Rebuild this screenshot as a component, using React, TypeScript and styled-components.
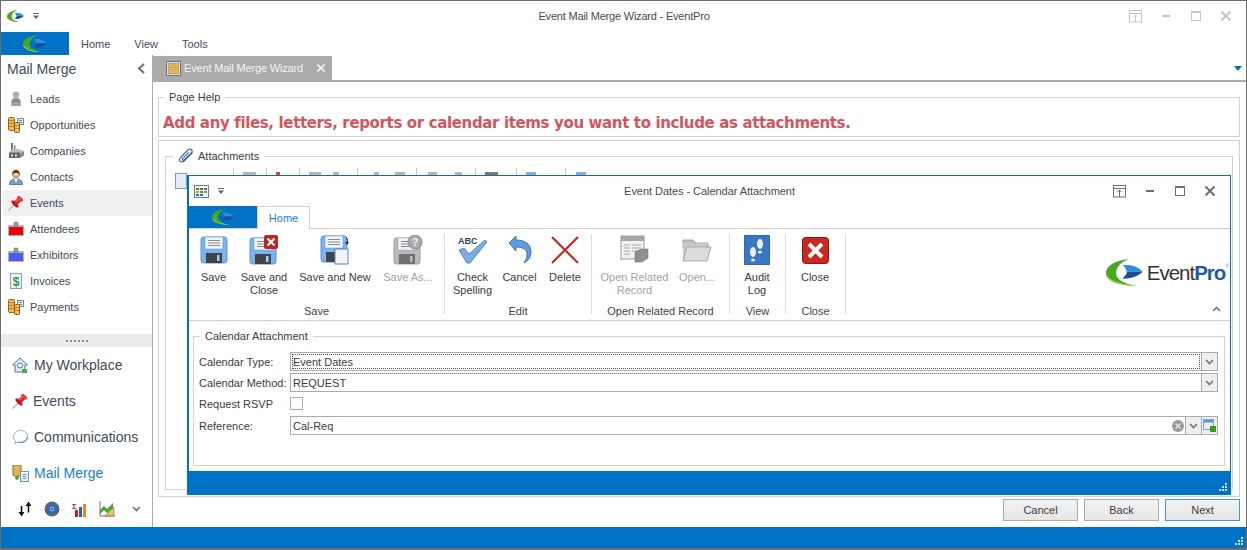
import React from "react";
import styled, { createGlobalStyle } from "styled-components";

const FONT = `"Liberation Sans", Arial, sans-serif`;

const GlobalStyle = createGlobalStyle`
  html, body {
    margin: 0;
    padding: 0;
    background: #fff;
  }
  * {
    box-sizing: border-box;
  }
`;

const Shell = styled.div`
  position: relative;
  width: 1247px;
  height: 550px;
  display: flex;
  flex-direction: column;
  overflow: hidden;
  background: #fff;
  border: 1px solid #6d6d6d;
  border-width: 1px 1px 2px 1px;
  font-family: ${FONT};
  font-size: 11px;
  color: #3c3c3c;
`;

const TitleBar = styled.div<{ $height: number }>`
  display: flex;
  align-items: center;
  height: ${({ $height }) => $height}px;
  flex: none;
`;

const TitleSide = styled.div<{ $right?: boolean; $pad: number }>`
  flex: 1;
  display: flex;
  align-items: center;
  justify-content: ${({ $right }) => ($right ? "flex-end" : "flex-start")};
  gap: 9px;
  padding: ${({ $right, $pad }) => ($right ? `0 ${$pad}px 0 0` : `0 0 0 ${$pad}px`)};
`;

const TitleText = styled.div<{ $tight?: boolean }>`
  color: #4a4a4a;
  font-size: 11px;
  letter-spacing: ${({ $tight }) => ($tight ? "-0.2px" : "-0.05px")};
  white-space: nowrap;
`;

const WinButton = styled.div<{ $faded?: boolean }>`
  width: 30px;
  height: 16px;
  display: flex;
  align-items: center;
  justify-content: center;
  color: ${({ $faded }) => ($faded ? "#c6c6c6" : "#6f6f6f")};
`;

const WinButtons = styled.div`
  display: flex;
`;

const MenuRow = styled.div`
  display: flex;
  align-items: center;
  height: 23px;
  margin-top: 1px;
  flex: none;
`;

const Brand = styled.div<{ $width: number }>`
  width: ${({ $width }) => $width}px;
  height: 100%;
  flex: none;
  background: #0072c6;
  display: flex;
  align-items: center;
  justify-content: center;
`;

const MenuItem = styled.div`
  font-size: 11px;
  color: #3f4a5a;
  margin-left: 12px;
  margin-right: 12px;
`;

const Body = styled.div`
  flex: 1;
  display: flex;
  min-height: 0;
`;

const Sidebar = styled.aside`
  width: 152px;
  flex: none;
  display: flex;
  flex-direction: column;
  border-right: 1px solid #ababab;
`;

const SideHeader = styled.div`
  height: 31px;
  display: flex;
  align-items: center;
  justify-content: space-between;
  padding: 0 6px 4px 6px;
  font-size: 14px;
  color: #404a58;
`;

const SideList = styled.div`
  display: flex;
  flex-direction: column;
  flex: 1;
`;

const SideItem = styled.div<{ $active?: boolean }>`
  height: 26px;
  display: flex;
  align-items: center;
  gap: 6px;
  margin: 0 0 0 2px;
  padding-left: 5px;
  background: ${({ $active }) => ($active ? "#f0f0f0" : "transparent")};
  font-size: 11px;
  color: #3f4a5a;
`;

const Splitter = styled.div`
  height: 13px;
  flex: none;
  background: #ebebeb;
  display: flex;
  align-items: center;
  justify-content: center;
  gap: 2px;
`;

const Dot = styled.span`
  width: 2px;
  height: 2px;
  background: #8f8f8f;
`;

const BigNav = styled.div`
  display: flex;
  flex-direction: column;
  flex: none;
`;

const BigItem = styled.div<{ $active?: boolean }>`
  height: 36px;
  display: flex;
  align-items: center;
  gap: 5px;
  padding-left: 11px;
  font-size: 14px;
  color: ${({ $active }) => ($active ? "#1580d8" : "#404a58")};
`;

const BottomIcons = styled.div`
  height: 36px;
  flex: none;
  display: flex;
  align-items: center;
  padding-left: 17px;
  gap: 12px;
`;

const MoreChevron = styled.span`
  display: flex;
  margin-left: 5px;
  color: #777;
`;

const Main = styled.main`
  flex: 1;
  min-width: 0;
  display: flex;
  flex-direction: column;
`;

const TabStrip = styled.div`
  height: 27px;
  flex: none;
  display: flex;
  align-items: flex-end;
  justify-content: space-between;
  border-bottom: 2px solid #ababab;
  padding-right: 4px;
`;

const DocTab = styled.div`
  width: 179px;
  height: 24px;
  display: flex;
  align-items: center;
  gap: 3px;
  padding-left: 13px;
  background: #ababab;
  color: #f4f4f4;
  font-size: 11px;
  letter-spacing: -0.17px;
  white-space: nowrap;
`;

const TabClose = styled.span`
  margin-left: auto;
  margin-right: 7px;
  display: flex;
`;

const OverflowArrow = styled.div`
  width: 0;
  height: 0;
  margin-bottom: 9px;
  border-left: 4px solid transparent;
  border-right: 4px solid transparent;
  border-top: 5px solid #0072c6;
`;

const Content = styled.div`
  flex: 1;
  display: flex;
  flex-direction: column;
  min-height: 0;
  padding: 0 6px 0 5px;
`;

const Group = styled.fieldset`
  margin: 0;
  padding: 0 4px;
  min-width: 0;
  border: 1px solid #d2d2d2;
`;

const GroupTitle = styled.legend`
  display: flex;
  align-items: center;
  gap: 4px;
  margin-left: 1px;
  padding: 0 5px;
  font-size: 11px;
  line-height: 15px;
  color: #3c3c3c;
`;

const PageHelp = styled(Group)`
  height: 47px;
  margin-top: 8px;
`;

const HelpText = styled.div`
  margin-top: 7px;
  font-family: "DejaVu Sans", sans-serif;
  font-size: 15px;
  letter-spacing: -0.36px;
  line-height: 22px;
  font-weight: 700;
  color: #d2565c;
  white-space: nowrap;
`;

const StepBox = styled.div`
  flex: 1;
  min-height: 0;
  margin-top: 3px;
  border: 1px solid #d2d2d2;
  padding: 7px 6px 6px 6px;
  display: flex;
`;

const AttachGroup = styled(Group)`
  flex: 1;
  padding: 0 0 0 6px;
`;

const PeekBar = styled.div`
  display: flex;
  align-items: flex-start;
  height: 30px;
`;

const PeekDoc = styled.div`
  width: 12px;
  height: 16px;
  margin: 9px 0 0 3px;
  background: #e4edf7;
  border: 1px solid #7a9cc6;
`;

const PeekDivider = styled.div<{ $gap: number }>`
  width: 1px;
  height: 8px;
  margin: 4px 0 0 ${({ $gap }) => $gap}px;
  background: #c9c9c9;
  flex: none;
`;

const PeekMark = styled.div<{ $gap: number; $width: number; $color: string }>`
  width: ${({ $width }) => $width}px;
  height: 4px;
  margin: 8px 0 0 ${({ $gap }) => $gap}px;
  background: ${({ $color }) => $color};
  flex: none;
`;

const Footer = styled.div`
  height: 30px;
  flex: none;
  display: flex;
  align-items: flex-start;
  justify-content: flex-end;
  gap: 6px;
  padding: 2px 6px 0 0;
`;

const FootButton = styled.div<{ $primary?: boolean }>`
  width: 75px;
  height: 22px;
  display: flex;
  align-items: center;
  justify-content: center;
  font-size: 11px;
  color: #3c3c3c;
  border: 1px solid ${({ $primary }) => ($primary ? "#3d9bea" : "#ababab")};
  background: linear-gradient(#f2f2f2, #e6e6e6);
`;

const StatusBar = styled.div<{ $height: number }>`
  position: relative;
  height: ${({ $height }) => $height}px;
  flex: none;
  background: #0072c6;
`;

const Grip = styled.svg`
  position: absolute;
  right: 2px;
  bottom: 2px;
`;

const Modal = styled.section`
  position: absolute;
  left: 186px;
  top: 174px;
  width: 1044px;
  height: 320px;
  display: flex;
  flex-direction: column;
  background: #fff;
  border: 1px solid #0072c6;
  border-left-width: 2px;
`;

const ModalTabs = styled.div`
  height: 23px;
  flex: none;
  display: flex;
  border-bottom: 1px solid #cfcfcf;
`;

const ActiveTab = styled.div`
  width: 53px;
  height: 23px;
  display: flex;
  align-items: center;
  justify-content: center;
  background: #fff;
  border: 1px solid #cfcfcf;
  border-bottom: none;
  color: #1580d8;
  font-size: 11px;
`;

const Ribbon = styled.div`
  position: relative;
  height: 92px;
  flex: none;
  display: flex;
  padding-top: 5px;
  border-bottom: 1px solid #cfcfcf;
`;

const RibbonGroup = styled.div<{ $width: number }>`
  width: ${({ $width }) => $width}px;
  height: 80px;
  flex: none;
  display: flex;
  flex-direction: column;
  border-right: 1px solid #dedede;
`;

const RibbonButtons = styled.div<{ $pad?: number }>`
  flex: 1;
  display: flex;
  padding-left: ${({ $pad }) => $pad ?? 0}px;
`;

const RibbonGroupLabel = styled.div`
  height: 15px;
  margin-bottom: -5px;
  text-align: center;
  font-size: 11px;
  line-height: 15px;
  color: #444;
`;

const RibbonButton = styled.div<{ $width: number; $off?: boolean }>`
  width: ${({ $width }) => $width}px;
  flex: none;
  display: flex;
  flex-direction: column;
  align-items: center;
  text-align: center;
  font-size: 11px;
  line-height: 13px;
  color: ${({ $off }) => ($off ? "#a2a2a2" : "#3c3c3c")};
`;

const RibbonIcon = styled.div`
  height: 30px;
  margin: 1px 0 6px;
  display: flex;
  align-items: center;
  justify-content: center;
`;

const LogoBox = styled.div`
  position: absolute;
  right: 1px;
  top: 30px;
  display: flex;
  align-items: center;
  gap: 4px;
`;

const LogoText = styled.span`
  font-size: 20.5px;
  letter-spacing: -1px;
  color: #333;
`;

const LogoPro = styled.b`
  color: #1e5ba8;
`;

const LogoMark = styled.sup`
  font-size: 5px;
  letter-spacing: 0;
  color: #8a9bb0;
  vertical-align: 12px;
  line-height: 0;
`;

const Collapse = styled.div`
  position: absolute;
  right: 9px;
  bottom: 8px;
  display: flex;
  color: #777;
`;

const ModalBody = styled.div`
  flex: 1;
  min-height: 0;
  padding: 0 5px 5px 4px;
  display: flex;
`;

const FormGroup = styled(Group)`
  flex: 1;
  padding: 0 6px 0 5px;
  margin-top: 8px;
`;

const FormGrid = styled.div`
  display: grid;
  grid-template-columns: 91px 1fr;
  row-gap: 2px;
  align-items: center;
  margin-top: 8px;
`;

const FormLabel = styled.div`
  font-size: 11px;
  color: #3c3c3c;
  white-space: nowrap;
`;

const FieldBox = styled.div`
  height: 19px;
  display: flex;
  align-items: stretch;
  border: 1px solid #ababab;
`;

const FieldValue = styled.div<{ $focused?: boolean }>`
  flex: 1;
  display: flex;
  align-items: center;
  margin: 1px;
  font-size: 11px;
  color: #3c3c3c;
  border: 1px dotted ${({ $focused }) => ($focused ? "#555" : "transparent")};
`;

const FieldButton = styled.div`
  width: 16px;
  flex: none;
  display: flex;
  align-items: center;
  justify-content: center;
  background: #efefef;
  border-left: 1px solid #ababab;
  color: #777;
`;

const ClearIcon = styled.div`
  width: 13px;
  flex: none;
  display: flex;
  align-items: center;
`;

const CheckBox = styled.div`
  width: 13px;
  height: 13px;
  margin: 3px 0 4px;
  border: 1px solid #ababab;
`;

/* ---- drawings ---- */

const Swoosh = ({ width }: { width: number }) => (
  <svg width={width} height={width * 0.73} viewBox="0 0 110 80">
    <path d="M68 0C28 4 0 20 0 42c0 22 34 36 92 38C58 74 30 62 30 42 30 24 46 8 68 0Z" fill="#4aa820" />
    <path d="M0 42c0 22 34 36 92 38C58 74 22 70 8 54 4 50 1 46 0 42Z" fill="#9ccc3c" />
    <path d="M50 18c26-2 48 6 59 20-20-1-36-1-47 0-3-8-7-14-12-20Z" fill="#2b8fe0" />
    <path d="M47 58c10-6 15-12 15-20 11-1 27-1 47 0-14 14-36 22-62 20Z" fill="#1a4f98" />
  </svg>
);

const PinBoxIcon = () => (
  <svg width="14" height="13" viewBox="0 0 14 13" fill="none" stroke="currentColor">
    <rect x=".5" y=".5" width="12" height="11.5" />
    <path d="M.5 3.500h12M6.500 12V5M4.500 7l2-2 2 2" />
  </svg>
);
const MinIcon = () => (
  <svg width="9" height="3" viewBox="0 0 9 3">
    <rect width="8" height="2" fill="currentColor" />
  </svg>
);
const MaxIcon = () => (
  <svg width="10" height="10" viewBox="0 0 10 10" fill="none" stroke="currentColor">
    <rect x=".5" y=".5" width="9" height="9" />
    <rect x="0" y="0" width="10" height="2" fill="currentColor" stroke="none" />
  </svg>
);
const CloseIcon = ({ size = 10, w = 2 }: { size?: number; w?: number }) => (
  <svg width={size} height={size} viewBox="0 0 10 10" stroke="currentColor" strokeWidth={w}>
    <path d="M.5.5l9 9M9.5.5l-9 9" />
  </svg>
);
const ChevronDown = () => (
  <svg width="9" height="6" viewBox="0 0 9 6" fill="none" stroke="currentColor" strokeWidth="1.7">
    <path d="M1 1l3.500 3.500L8 1" />
  </svg>
);
const ChevronUp = () => (
  <svg width="9" height="6" viewBox="0 0 9 6" fill="none" stroke="currentColor" strokeWidth="1.7">
    <path d="M1 5l3.500-3.500L8 5" />
  </svg>
);
const QuickArrow = () => (
  <svg width="7" height="7" viewBox="0 0 7 7" fill="#666">
    <rect x="0" y="0" width="6" height="1" />
    <path d="M0 2.500h6L3 6Z" />
  </svg>
);

const PersonIcon = () => (
  <svg width="16" height="16" viewBox="0 0 16 16">
    <circle cx="8" cy="3.800" r="3.300" fill="#b0b0b0" />
    <path d="M3.500 15V10c0-2 2-3 4.500-3s4.500 1 4.500 3v5Z" fill="#8e8e8e" />
    <path d="M5 15v-4h6v4Z" fill="#a3a3a3" />
  </svg>
);
const CoinsIcon = () => (
  <svg width="16" height="16" viewBox="0 0 16 16">
    <rect x="9.500" y="1.500" width="6" height="6" fill="#e4e8ee" stroke="#7b8794" />
    <path d="M11 3.500h3M11 5.500h3" stroke="#7b8794" />
    <rect x=".5" y=".5" width="6" height="13" rx="1" fill="#eeb94f" stroke="#99661a" />
    <path d="M1 3.500h5M1 6.500h5M1 9.500h5" stroke="#b98328" />
    <rect x="6.500" y="5.500" width="5" height="10" rx="1" fill="#f0c060" stroke="#8c5a14" />
    <path d="M7 8.500h4M7 11.500h4" stroke="#b98328" />
  </svg>
);
const CompanyIcon = () => (
  <svg width="16" height="16" viewBox="0 0 16 16">
    <rect x="3" y="0" width="2" height="7" fill="#777" />
    <rect x="6" y="2" width="1.500" height="5" fill="#8a8a8a" />
    <path d="M1 9 5 6h5l6 2-4 2.500H1Z" fill="#bdbdbd" />
    <path d="M1 9.500h11V15H1Z" fill="#666" />
    <path d="M12 10.500l4-2.500v4.500L12 15Z" fill="#8c8c8c" />
    <rect x="3" y="11.500" width="2" height="2" fill="#e2e2e2" />
    <rect x="7" y="11.500" width="2" height="2" fill="#e2e2e2" />
  </svg>
);
const ContactIcon = () => (
  <svg width="16" height="16" viewBox="0 0 16 16">
    <path d="M1.500 15.500c0-4 3-6 6.500-6s6.500 2 6.500 6Z" fill="#7f9cc4" stroke="#45587a" strokeWidth=".7" />
    <path d="M6 9.500h4l-2 4Z" fill="#fff" />
    <circle cx="8" cy="5" r="3.500" fill="#f3cda9" stroke="#5f3a1e" strokeWidth=".8" />
    <path d="M4.400 5C4.400 2.300 6 .8 8 .8s3.600 1.500 3.600 4.200C10 3.500 6 3.500 4.400 5Z" fill="#6b3f1d" />
  </svg>
);
const PinIcon = () => (
  <svg width="16" height="16" viewBox="0 0 16 16">
    <path d="M.5 15.500 6 10" stroke="#b5b5b5" strokeWidth="1.200" />
    <path d="M8.200 7.800 12 4" stroke="#d81f26" strokeWidth="4.500" />
    <ellipse cx="7" cy="9" rx="4.600" ry="1.900" transform="rotate(45 7 9)" fill="#c9161c" />
    <ellipse cx="12.200" cy="3.800" rx="3.600" ry="1.800" transform="rotate(45 12.200 3.800)" fill="#ee3a40" />
    <path d="M8 7l2.500-2.500" stroke="#f8a0a0" strokeWidth="1" />
  </svg>
);
const BadgeIcon = ({ color }: { color: string }) => (
  <svg width="16" height="16" viewBox="0 0 16 16">
    <rect x="0" y="4" width="16" height="11" fill="#b4b4b4" />
    <rect x="1" y="6" width="14" height="8" fill={color} />
    <rect x="6" y="1" width="4" height="5" rx="1" fill="#9a9a9a" stroke="#666" strokeWidth=".5" />
  </svg>
);
const InvoiceIcon = () => (
  <svg width="16" height="16" viewBox="0 0 16 16">
    <rect x="2.500" y=".5" width="11" height="15" fill="#eef4fb" stroke="#7fa3cc" />
    <text x="8" y="12.500" fontFamily="Liberation Sans, sans-serif" fontWeight="700" fontSize="12" fill="#2b9a2b" textAnchor="middle">$</text>
  </svg>
);
const HouseIcon = () => (
  <svg width="17" height="17" viewBox="0 0 17 17">
    <path d="M.5 8 8 1l7.500 7H13v7H3V8Z" fill="#dbe8f6" stroke="#4d76a8" />
    <rect x="5.500" y="6" width="5" height="5" rx="2.500" fill="#fff" stroke="#4d76a8" />
    <rect x="10" y="12" width="5" height="4" fill="#4fa84a" />
  </svg>
);
const BubbleIcon = () => (
  <svg width="17" height="17" viewBox="0 0 17 17" fill="none">
    <path d="M8.500 1.500c4 0 7 2.600 7 6s-3 6-7 6c-1 0-2-.2-2.800-.4L3 15l.5-3C2 11 1.500 9.500 1.500 7.500c0-3.400 3-6 7-6Z" fill="#fff" stroke="#a6adb5" />
    <path d="M15.500 7.500c0 3.400-3 6-7 6-1 0-2-.2-2.800-.4" stroke="#5f92c8" strokeWidth="1.200" />
  </svg>
);
const MergeIcon = () => (
  <svg width="17" height="17" viewBox="0 0 17 17">
    <rect x="1" y="0" width="8" height="11" rx="1" fill="#e2b45a" stroke="#8c6a2a" />
    <path d="M3 13h4M5 11v4" stroke="#2c9a2c" strokeWidth="1.300" />
    <rect x="8.500" y="6.500" width="8" height="10" fill="#eef4fb" stroke="#6e93c2" />
    <path d="M10.500 9.500h4M10.500 11.500h4M10.500 13.500h4" stroke="#6e93c2" />
  </svg>
);
const SortIcon = () => (
  <svg width="14" height="16" viewBox="0 0 14 16" fill="#111">
    <path d="M3.500 15.500.5 11h2.200V5h1.600v6h2.200Z" />
    <path d="M10.500.5 7.500 5h2.200v6.500h1.600V5h2.200Z" />
  </svg>
);
const GlobeIcon = () => (
  <svg width="16" height="16" viewBox="0 0 16 16">
    <circle cx="8" cy="8" r="7.500" fill="#666" />
    <circle cx="8" cy="8" r="5.300" fill="#2d68b8" />
    <circle cx="8" cy="8" r="2.400" fill="#7fa8dc" />
    <circle cx="8" cy="8" r="1" fill="#244f8e" />
  </svg>
);
const SumChartIcon = () => (
  <svg width="15" height="15" viewBox="0 0 15 15">
    <text x="0" y="7" fontFamily="Liberation Sans, sans-serif" fontWeight="700" fontSize="8" fill="#cc1e1e">Σ</text>
    <rect x="3" y="8" width="3" height="7" fill="#cc1e1e" />
    <rect x="7" y="5" width="3" height="10" fill="#2c5fa8" />
    <rect x="11" y="2" width="3" height="13" fill="#e58a1f" />
  </svg>
);
const AreaChartIcon = () => (
  <svg width="16" height="16" viewBox="0 0 16 16">
    <path d="M1 0v15h15" fill="none" stroke="#777" />
    <path d="M1 9l4-4 3 3 6-6v5L8 12 5 9l-4 4Z" fill="#4fa030" />
    <path d="M15 6v9H6Z" fill="#e8c27a" stroke="#9a7030" strokeWidth=".7" />
  </svg>
);
const ClipIcon = () => (
  <svg width="16" height="16" viewBox="0 0 16 16" fill="none" stroke="#2f5c99" strokeWidth="1.100">
    <path d="M14.500 4.500 6 13c-1.400 1.400-3 1.100-3.800.3-.8-.8-1-2.400.3-3.800l7.800-7.800c1-1 2.400-.9 3.200-.1.800.8.900 2.200-.1 3.200L6.300 11.900c-.5.500-1.200.4-1.600.1-.4-.4-.4-1.100.1-1.600l6-6" />
  </svg>
);
const TabPanelIcon = () => (
  <svg width="15" height="15" viewBox="0 0 15 15">
    <rect x=".5" y=".5" width="14" height="14" fill="#fff" stroke="#54759c" />
    <rect x="2" y="2" width="5" height="5" fill="#e9b75a" stroke="#8d6a22" strokeWidth=".5" />
    <rect x="8" y="2" width="5" height="5" fill="#e9b75a" stroke="#8d6a22" strokeWidth=".5" />
    <rect x="2" y="8" width="11" height="5" fill="#e9b75a" stroke="#8d6a22" strokeWidth=".5" />
  </svg>
);
const CalendarIcon = () => (
  <svg width="15" height="13" viewBox="0 0 15 13">
    <rect x=".5" y=".5" width="14" height="12" fill="#f4f4f4" stroke="#6b7f96" />
    <rect x="2" y="3" width="3" height="2" fill="#3a9a3a" />
    <rect x="6" y="3" width="3" height="2" fill="#d33" />
    <rect x="10" y="3" width="3" height="2" fill="#2b6fc0" />
    <rect x="2" y="6" width="3" height="2" fill="#d9a520" />
    <rect x="6" y="6" width="3" height="2" fill="#3a9a3a" />
    <rect x="10" y="6" width="3" height="2" fill="#888" />
    <rect x="2" y="9" width="3" height="2" fill="#2b6fc0" />
    <rect x="6" y="9" width="3" height="2" fill="#2b6fc0" />
  </svg>
);

const Floppy = ({ gray }: { gray?: boolean }) => {
  const body = gray ? "#b9b9b9" : "#7db2ea";
  const edge = gray ? "#a0a0a0" : "#5c95d4";
  const dark = gray ? "#707070" : "#404448";
  return (
    <g>
      <rect x="0" y="0" width="26" height="26" rx="2.500" fill={body} stroke={edge} />
      <rect x="4" y="0" width="18" height="12" fill="#f0f4f8" stroke={edge} strokeWidth=".5" />
      <path d="M7 3.500h12M7 6h12M7 8.500h12" stroke="#8b8b8b" />
      <rect x="5" y="16" width="16" height="10" fill={dark} />
      <rect x="16" y="18" width="2.500" height="6" fill={gray ? "#bbb" : "#a5cbf0"} />
    </g>
  );
};

const SaveIcon = () => (
  <svg width="28" height="28" viewBox="-1 -1 28 28">
    <Floppy />
  </svg>
);
const SaveCloseIcon = () => (
  <svg width="30" height="30" viewBox="-1 -3 30 30">
    <Floppy />
    <rect x="14" y="-3" width="14" height="14" rx="2" fill="#c4231c" />
    <path d="M17.500.500l7 7M24.500.500l-7 7" stroke="#fff" strokeWidth="2.200" />
  </svg>
);
const SaveNewIcon = () => (
  <svg width="30" height="30" viewBox="-1 -1 30 30">
    <Floppy />
    <path d="M25 2c2 1 2 3 1 5" fill="none" stroke="#222" />
    <path d="M24 6h4l-2 3Z" fill="#222" />
    <path d="M14 13h13v15H14Z" fill="#f1f5fb" stroke="#4f86c4" />
  </svg>
);
const SaveAsIcon = () => (
  <svg width="30" height="30" viewBox="-1 -3 30 30">
    <Floppy gray />
    <circle cx="21" cy="4" r="7" fill="#a9a9a9" stroke="#8b8b8b" />
    <text x="21" y="8" fontFamily="Liberation Sans, sans-serif" fontWeight="700" fontSize="11" fill="#eee" textAnchor="middle">?</text>
  </svg>
);
const SpellIcon = () => (
  <svg width="31" height="30" viewBox="0 0 31 30">
    <text x="1" y="9" fontFamily="Liberation Sans, sans-serif" fontWeight="700" fontSize="9" fill="#2d3f66">ABC</text>
    <path d="M2 15l5-2 5 6L28 5l2 2-17 21h-3Z" fill="#79aee6" stroke="#3d74b8" strokeWidth=".8" />
  </svg>
);
const UndoIcon = () => (
  <svg width="24" height="30" viewBox="0 0 24 30">
    <path d="M1 8 8 1v4c9 0 15 4 15 12 0 5-3 9-7 11 2-3 3-6 3-9 0-5-5-7-11-7v4Z" fill="#5c9ce0" stroke="#2d5f9e" strokeWidth=".8" />
  </svg>
);
const DeleteIcon = () => (
  <svg width="28" height="28" viewBox="0 0 28 28" stroke="#c8201c" strokeWidth="2">
    <path d="M1 1l26 26M27 1 1 27" />
  </svg>
);
const RelatedIcon = () => (
  <svg width="30" height="30" viewBox="0 0 30 30">
    <rect x="1" y="1" width="23" height="23" fill="#f1f1f1" stroke="#9a9a9a" />
    <rect x="1" y="1" width="23" height="5" fill="#a6a6a6" />
    <path d="M4 10h6M12 10h9M4 13h6M12 13h9M4 16h6M12 16h9M4 19h6" stroke="#a9a9a9" />
    <path d="M15 17l6-3h7v9l-6 4h-7Z" fill="#8f8f8f" stroke="#777" strokeWidth=".6" />
  </svg>
);
const FolderIcon = () => (
  <svg width="30" height="26" viewBox="0 0 30 26">
    <path d="M1 3h10l3 3h12v5H1Z" fill="#bdbdbd" stroke="#a5a5a5" />
    <path d="M1 24 1 6h24v18Z" fill="#c8c8c8" />
    <path d="M1 24 5 10h24l-4 14Z" fill="#dcdcdc" stroke="#ababab" />
  </svg>
);
const AuditIcon = () => (
  <svg width="26" height="30" viewBox="0 0 26 30">
    <rect x="0" y="0" width="26" height="30" rx="2" fill="#3b76c4" stroke="#2a5a9e" />
    <ellipse cx="16" cy="9" rx="3" ry="5" fill="#e8f1fb" />
    <ellipse cx="9" cy="17" rx="3" ry="5" fill="#e8f1fb" />
    <ellipse cx="16" cy="17" rx="2" ry="1.500" fill="#e8f1fb" />
    <ellipse cx="9" cy="25" rx="2" ry="1.500" fill="#e8f1fb" />
  </svg>
);
const CloseBigIcon = () => (
  <svg width="27" height="27" viewBox="0 0 27 27">
    <rect x=".5" y=".5" width="26" height="26" rx="3" fill="#c9281f" stroke="#8e1610" />
    <path d="M7 7l13 13M20 7 7 20" stroke="#fff" strokeWidth="4" />
  </svg>
);
const ClearGlyph = () => (
  <svg width="12" height="12" viewBox="0 0 12 12">
    <circle cx="6" cy="6" r="6" fill="#9a9a9a" />
    <path d="M3.500 3.500l5 5M8.500 3.500l-5 5" stroke="#eee" strokeWidth="1.200" />
  </svg>
);
const LookupGlyph = () => (
  <svg width="13" height="13" viewBox="0 0 13 13">
    <rect x=".5" y=".5" width="10" height="10" fill="#e8f0fa" stroke="#7aa6d8" />
    <rect x="1" y="1" width="9" height="2.500" fill="#5a98d8" />
    <rect x="7" y="7" width="6" height="6" fill="#3c9a14" />
  </svg>
);
const GripDots = () => (
  <Grip width="9" height="9" viewBox="0 0 9 9" fill="#cfe3f4">
    <rect x="6" y="0" width="2" height="2" />
    <rect x="3" y="3" width="2" height="2" />
    <rect x="6" y="3" width="2" height="2" />
    <rect x="0" y="6" width="2" height="2" />
    <rect x="3" y="6" width="2" height="2" />
    <rect x="6" y="6" width="2" height="2" />
  </Grip>
);

const WindowButtons = ({ faded }: { faded?: boolean }) => (
  <WinButtons>
    <WinButton $faded={faded}><PinBoxIcon /></WinButton>
    <WinButton $faded={faded}><MinIcon /></WinButton>
    <WinButton $faded={faded}><MaxIcon /></WinButton>
    <WinButton $faded={faded}><CloseIcon /></WinButton>
  </WinButtons>
);

const sideItems: { label: string; icon: React.ReactNode; active?: boolean }[] = [
  { label: "Leads", icon: <PersonIcon /> },
  { label: "Opportunities", icon: <CoinsIcon /> },
  { label: "Companies", icon: <CompanyIcon /> },
  { label: "Contacts", icon: <ContactIcon /> },
  { label: "Events", icon: <PinIcon />, active: true },
  { label: "Attendees", icon: <BadgeIcon color="#f00000" /> },
  { label: "Exhibitors", icon: <BadgeIcon color="#4a5cf0" /> },
  { label: "Invoices", icon: <InvoiceIcon /> },
  { label: "Payments", icon: <CoinsIcon /> },
];

const bigItems: { label: string; icon: React.ReactNode; active?: boolean }[] = [
  { label: "My Workplace", icon: <HouseIcon /> },
  { label: "Events", icon: <PinIcon /> },
  { label: "Communications", icon: <BubbleIcon /> },
  { label: "Mail Merge", icon: <MergeIcon />, active: true },
];

// the attachment toolbar, almost entirely hidden behind the dialog
const peekParts: { gap: number; width?: number; color?: string }[] = [
  { gap: 46 },
  { gap: 9, width: 13, color: "#b5b5b5" },
  { gap: 10 },
  { gap: 9, width: 4, color: "#d84040" },
  { gap: 19 },
  { gap: 9, width: 12, color: "#b5b5b5" },
  { gap: 12, width: 6, color: "#b5b5b5" },
  { gap: 18 },
  { gap: 16, width: 5, color: "#b5b5b5" },
  { gap: 16, width: 10, color: "#b5b5b5" },
  { gap: 11 },
  { gap: 11, width: 9, color: "#b5b5b5" },
  { gap: 18, width: 7, color: "#b5b5b5" },
  { gap: 13 },
  { gap: 9, width: 13, color: "#777" },
  { gap: 18 },
  { gap: 9, width: 10, color: "#8eaed6" },
  { gap: 29 },
  { gap: 10, width: 10, color: "#8eaed6" },
];

export default function App() {
  return (
    <>
      <GlobalStyle />
      <Shell>
        <TitleBar $height={30}>
          <TitleSide $pad={6}>
            <Swoosh width={17} />
            <QuickArrow />
          </TitleSide>
          <TitleText $tight>Event Mail Merge Wizard - EventPro</TitleText>
          <TitleSide $right $pad={5}>
            <WindowButtons faded />
          </TitleSide>
        </TitleBar>
        <MenuRow>
          <Brand $width={68}>
            <Swoosh width={24} />
          </Brand>
          <MenuItem>Home</MenuItem>
          <MenuItem>View</MenuItem>
          <MenuItem>Tools</MenuItem>
        </MenuRow>
        <Body>
          <Sidebar>
            <SideHeader>
              Mail Merge
              <svg width="9" height="11" viewBox="0 0 9 11" fill="none" stroke="#6f6f6f" strokeWidth="2">
                <path d="M7 1 2 5.500 7 10" />
              </svg>
            </SideHeader>
            <SideList>
              {sideItems.map((item) => (
                <SideItem key={item.label} $active={item.active}>
                  {item.icon}
                  {item.label}
                </SideItem>
              ))}
            </SideList>
            <Splitter>
              {[0, 1, 2, 3, 4, 5].map((i) => (
                <Dot key={i} />
              ))}
            </Splitter>
            <BigNav>
              {bigItems.map((item) => (
                <BigItem key={item.label} $active={item.active}>
                  {item.icon}
                  {item.label}
                </BigItem>
              ))}
            </BigNav>
            <BottomIcons>
              <SortIcon />
              <GlobeIcon />
              <SumChartIcon />
              <AreaChartIcon />
              <MoreChevron>
                <ChevronDown />
              </MoreChevron>
            </BottomIcons>
          </Sidebar>
          <Main>
            <TabStrip>
              <DocTab>
                <TabPanelIcon />
                Event Mail Merge Wizard
                <TabClose>
                  <CloseIcon size={8} />
                </TabClose>
              </DocTab>
              <OverflowArrow />
            </TabStrip>
            <Content>
              <PageHelp>
                <GroupTitle>Page Help</GroupTitle>
                <HelpText>Add any files, letters, reports or calendar items you want to include as attachments.</HelpText>
              </PageHelp>
              <StepBox>
                <AttachGroup>
                  <GroupTitle>
                    <ClipIcon />
                    Attachments
                  </GroupTitle>
                  <PeekBar>
                    <PeekDoc />
                    {peekParts.map((part, i) =>
                      part.width ? (
                        <PeekMark key={i} $gap={part.gap} $width={part.width} $color={part.color ?? "#b5b5b5"} />
                      ) : (
                        <PeekDivider key={i} $gap={part.gap} />
                      ),
                    )}
                  </PeekBar>
                </AttachGroup>
              </StepBox>
            </Content>
            <Footer>
              <FootButton>Cancel</FootButton>
              <FootButton>Back</FootButton>
              <FootButton $primary>Next</FootButton>
            </Footer>
          </Main>
        </Body>
        <StatusBar $height={21}>
          <GripDots />
        </StatusBar>

        <Modal>
          <TitleBar $height={30}>
            <TitleSide $pad={5}>
              <CalendarIcon />
              <QuickArrow />
            </TitleSide>
            <TitleText>Event Dates - Calendar Attachment</TitleText>
            <TitleSide $right $pad={5}>
              <WindowButtons />
            </TitleSide>
          </TitleBar>
          <ModalTabs>
            <Brand $width={68}>
              <Swoosh width={22} />
            </Brand>
            <ActiveTab>Home</ActiveTab>
          </ModalTabs>
          <Ribbon>
            <RibbonGroup $width={256}>
              <RibbonButtons>
                <RibbonButton $width={49}>
                  <RibbonIcon><SaveIcon /></RibbonIcon>
                  Save
                </RibbonButton>
                <RibbonButton $width={52}>
                  <RibbonIcon><SaveCloseIcon /></RibbonIcon>
                  Save and Close
                </RibbonButton>
                <RibbonButton $width={90}>
                  <RibbonIcon><SaveNewIcon /></RibbonIcon>
                  Save and New
                </RibbonButton>
                <RibbonButton $width={56} $off>
                  <RibbonIcon><SaveAsIcon /></RibbonIcon>
                  Save As...
                </RibbonButton>
              </RibbonButtons>
              <RibbonGroupLabel>Save</RibbonGroupLabel>
            </RibbonGroup>
            <RibbonGroup $width={147}>
              <RibbonButtons $pad={4}>
                <RibbonButton $width={47}>
                  <RibbonIcon><SpellIcon /></RibbonIcon>
                  Check Spelling
                </RibbonButton>
                <RibbonButton $width={47}>
                  <RibbonIcon><UndoIcon /></RibbonIcon>
                  Cancel
                </RibbonButton>
                <RibbonButton $width={44}>
                  <RibbonIcon><DeleteIcon /></RibbonIcon>
                  Delete
                </RibbonButton>
              </RibbonButtons>
              <RibbonGroupLabel>Edit</RibbonGroupLabel>
            </RibbonGroup>
            <RibbonGroup $width={138}>
              <RibbonButtons $pad={5}>
                <RibbonButton $width={75} $off>
                  <RibbonIcon><RelatedIcon /></RibbonIcon>
                  Open Related Record
                </RibbonButton>
                <RibbonButton $width={50} $off>
                  <RibbonIcon><FolderIcon /></RibbonIcon>
                  Open...
                </RibbonButton>
              </RibbonButtons>
              <RibbonGroupLabel>Open Related Record</RibbonGroupLabel>
            </RibbonGroup>
            <RibbonGroup $width={56}>
              <RibbonButtons $pad={7}>
                <RibbonButton $width={40}>
                  <RibbonIcon><AuditIcon /></RibbonIcon>
                  Audit Log
                </RibbonButton>
              </RibbonButtons>
              <RibbonGroupLabel>View</RibbonGroupLabel>
            </RibbonGroup>
            <RibbonGroup $width={60}>
              <RibbonButtons $pad={1}>
                <RibbonButton $width={56}>
                  <RibbonIcon><CloseBigIcon /></RibbonIcon>
                  Close
                </RibbonButton>
              </RibbonButtons>
              <RibbonGroupLabel>Close</RibbonGroupLabel>
            </RibbonGroup>
            <LogoBox>
              <Swoosh width={37} />
              <LogoText>
                Event<LogoPro>Pro</LogoPro>
                <LogoMark>®</LogoMark>
              </LogoText>
            </LogoBox>
            <Collapse>
              <ChevronUp />
            </Collapse>
          </Ribbon>
          <ModalBody>
            <FormGroup>
              <GroupTitle>Calendar Attachment</GroupTitle>
              <FormGrid>
                <FormLabel>Calendar Type:</FormLabel>
                <FieldBox>
                  <FieldValue $focused>Event Dates</FieldValue>
                  <FieldButton><ChevronDown /></FieldButton>
                </FieldBox>
                <FormLabel>Calendar Method:</FormLabel>
                <FieldBox>
                  <FieldValue>REQUEST</FieldValue>
                  <FieldButton><ChevronDown /></FieldButton>
                </FieldBox>
                <FormLabel>Request RSVP</FormLabel>
                <CheckBox />
                <FormLabel>Reference:</FormLabel>
                <FieldBox>
                  <FieldValue>Cal-Req</FieldValue>
                  <ClearIcon><ClearGlyph /></ClearIcon>
                  <FieldButton><ChevronDown /></FieldButton>
                  <FieldButton><LookupGlyph /></FieldButton>
                </FieldBox>
              </FormGrid>
            </FormGroup>
          </ModalBody>
          <StatusBar $height={23}>
            <GripDots />
          </StatusBar>
        </Modal>
      </Shell>
    </>
  );
}
